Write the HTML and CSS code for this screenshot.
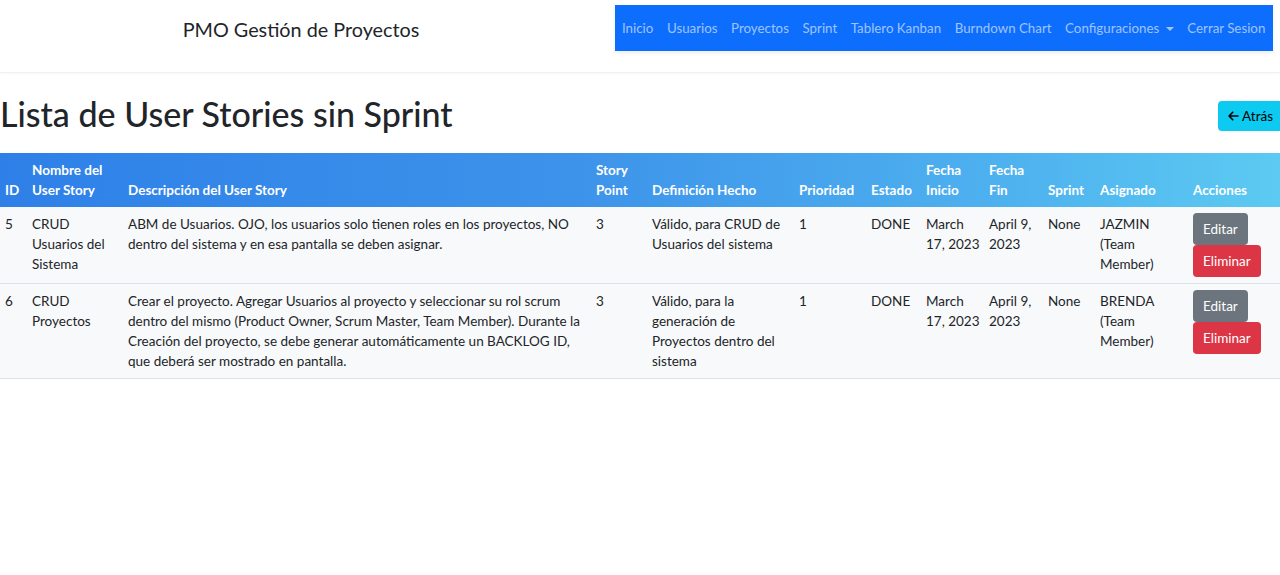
FILE: index.html
```html
<!DOCTYPE html>
<html lang="es">
<head>
<meta charset="utf-8">
<title>PMO Gestión de Proyectos</title>
<link rel="stylesheet" href="styles.css">
</head>
<body>
<header class="topbar">
  <div class="brand">PMO Gestión de Proyectos</div>
  <nav class="nav">
    <a href="#">Inicio</a>
    <a href="#">Usuarios</a>
    <a href="#">Proyectos</a>
    <a href="#">Sprint</a>
    <a href="#">Tablero Kanban</a>
    <a href="#">Burndown Chart</a>
    <a href="#" class="dropdown">Configuraciones <span class="caret"></span></a>
    <a href="#">Cerrar Sesion</a>
  </nav>
</header>
<main>
  <div class="title-row">
    <h1>Lista de User Stories sin Sprint</h1>
    <a href="#" class="btn btn-info"><svg class="arrow" viewBox="0 0 448 512" width="11" height="12"><path d="M9.4 233.4c-12.5 12.5-12.5 32.8 0 45.3l160 160c12.5 12.5 32.8 12.5 45.3 0s12.5-32.8 0-45.3L109.2 288H416c17.7 0 32-14.3 32-32s-14.3-32-32-32H109.3L214.6 118.6c12.5-12.5 12.5-32.8 0-45.3s-32.8-12.5-45.3 0l-160 160z"/></svg> Atrás</a>
  </div>
  <table class="stories">
    <colgroup>
      <col class="c-id"><col class="c-name"><col class="c-desc"><col class="c-sp"><col class="c-def"><col class="c-prio"><col class="c-est"><col class="c-fi"><col class="c-ff"><col class="c-spr"><col class="c-asig"><col class="c-acc">
    </colgroup>
    <thead>
      <tr>
        <th>ID</th><th>Nombre del User Story</th><th>Descripción del User Story</th><th>Story Point</th><th>Definición Hecho</th><th>Prioridad</th><th>Estado</th><th>Fecha Inicio</th><th>Fecha Fin</th><th>Sprint</th><th>Asignado</th><th>Acciones</th>
      </tr>
    </thead>
    <tbody>
      <tr>
        <td>5</td>
        <td>CRUD Usuarios del Sistema</td>
        <td>ABM de Usuarios. OJO, los usuarios solo tienen roles en los proyectos, NO dentro del sistema y en esa pantalla se deben asignar.</td>
        <td>3</td>
        <td>Válido, para CRUD de Usuarios del sistema</td>
        <td>1</td>
        <td>DONE</td>
        <td class="date">March 17, 2023</td>
        <td class="date">April 9, 2023</td>
        <td>None</td>
        <td>JAZMIN (Team Member)</td>
        <td class="actions"><a href="#" class="btn btn-secondary">Editar</a><a href="#" class="btn btn-danger">Eliminar</a></td>
      </tr>
      <tr>
        <td>6</td>
        <td>CRUD Proyectos</td>
        <td>Crear el proyecto. Agregar Usuarios al proyecto y seleccionar su rol scrum dentro del mismo (Product Owner, Scrum Master, Team Member). Durante la Creación del proyecto, se debe generar automáticamente un BACKLOG ID, que deberá ser mostrado en pantalla.</td>
        <td>3</td>
        <td>Válido, para la generación de Proyectos dentro del sistema</td>
        <td>1</td>
        <td>DONE</td>
        <td class="date">March 17, 2023</td>
        <td class="date">April 9, 2023</td>
        <td>None</td>
        <td>BRENDA (Team Member)</td>
        <td class="actions"><a href="#" class="btn btn-secondary">Editar</a><a href="#" class="btn btn-danger">Eliminar</a></td>
      </tr>
    </tbody>
  </table>
</main>
</body>
</html>
```
FILE: styles.css
```css
* { box-sizing: border-box; }
body {
  margin: 0;
  font-family: "Lato", "Open Sans", sans-serif;
  font-size: 13.5px;
  line-height: 20px;
  color: #212529;
  background: #fff;
}
a { text-decoration: none; }
.topbar {
  display: flex;
  align-items: flex-start;
  height: 73px;
  border-bottom: 1px solid #f0f1f2;
  box-shadow: 0 1px 2px rgba(0,0,0,0.03);
}
.brand {
  width: 602px;
  margin-right: 13px;
  text-align: center;
  font-size: 19.8px;
  line-height: 58px;
  color: #212529;
}
.nav {
  margin-top: 5px;
  height: 46px;
  width: 658px;
  background: #0d6efd;
  display: flex;
  align-items: center;
  padding-left: 7px;
  gap: 13.6px;
  box-shadow: 0 2px 4px rgba(0,0,0,0.08);
}
.nav a {
  color: rgba(255,255,255,0.6);
  font-size: 13.3px;
  white-space: nowrap;
}
.caret {
  display: inline-block;
  width: 0; height: 0;
  margin-left: 3px;
  vertical-align: 2px;
  border-left: 4px solid transparent;
  border-right: 4px solid transparent;
  border-top: 4.5px solid rgba(255,255,255,0.6);
}
.title-row {
  display: flex;
  justify-content: space-between;
  align-items: center;
  padding-top: 2px;
  height: 80px;
}
h1 {
  margin: 0;
  font-size: 34px;
  font-weight: 500;
  line-height: 44px;
  color: #212529;
}
.btn {
  display: inline-block;
  border-radius: 4px;
  font-size: 13.5px;
  line-height: 20px;
  padding: 6px 10px;
}
.btn-info {
  background: #0dcaf0;
  color: #000;
  padding: 5px 16px 5px 10px;
  margin-right: -9px;
  margin-top: 4px;
}
.arrow { vertical-align: -1px; fill: #000; }
.stories {
  width: 1280px;
  border-collapse: collapse;
  table-layout: fixed;
}
.c-id { width: 27px; }
.c-name { width: 96px; }
.c-desc { width: 468px; }
.c-sp { width: 56px; }
.c-def { width: 147px; }
.c-prio { width: 72px; }
.c-est { width: 55px; }
.c-fi { width: 63px; }
.c-ff { width: 59px; }
.c-spr { width: 52px; }
.c-asig { width: 93px; }
.c-acc { width: 92px; }
thead tr {
  background: linear-gradient(90deg, #2e80e8 0%, #3d93ea 45%, #4fb3ef 80%, #5ccaf2 100%);
}
th {
  color: #fff;
  font-weight: 700;
  text-align: left;
  vertical-align: bottom;
  padding: 7px 0 7px 5px;
  height: 54px;
}
tbody tr { background: #f8f9fa; border-bottom: 1px solid #dee2e6; }
td {
  vertical-align: top;
  padding: 7px 5px 7px 5px;
}
td.date { padding-right: 0; }
td.actions { padding: 6px 0 6px 5px; }
.actions .btn { display: block; width: fit-content; }
.btn-secondary { background: #6c757d; color: #fff; }
.btn-danger { background: #dc3545; color: #fff; }
```
